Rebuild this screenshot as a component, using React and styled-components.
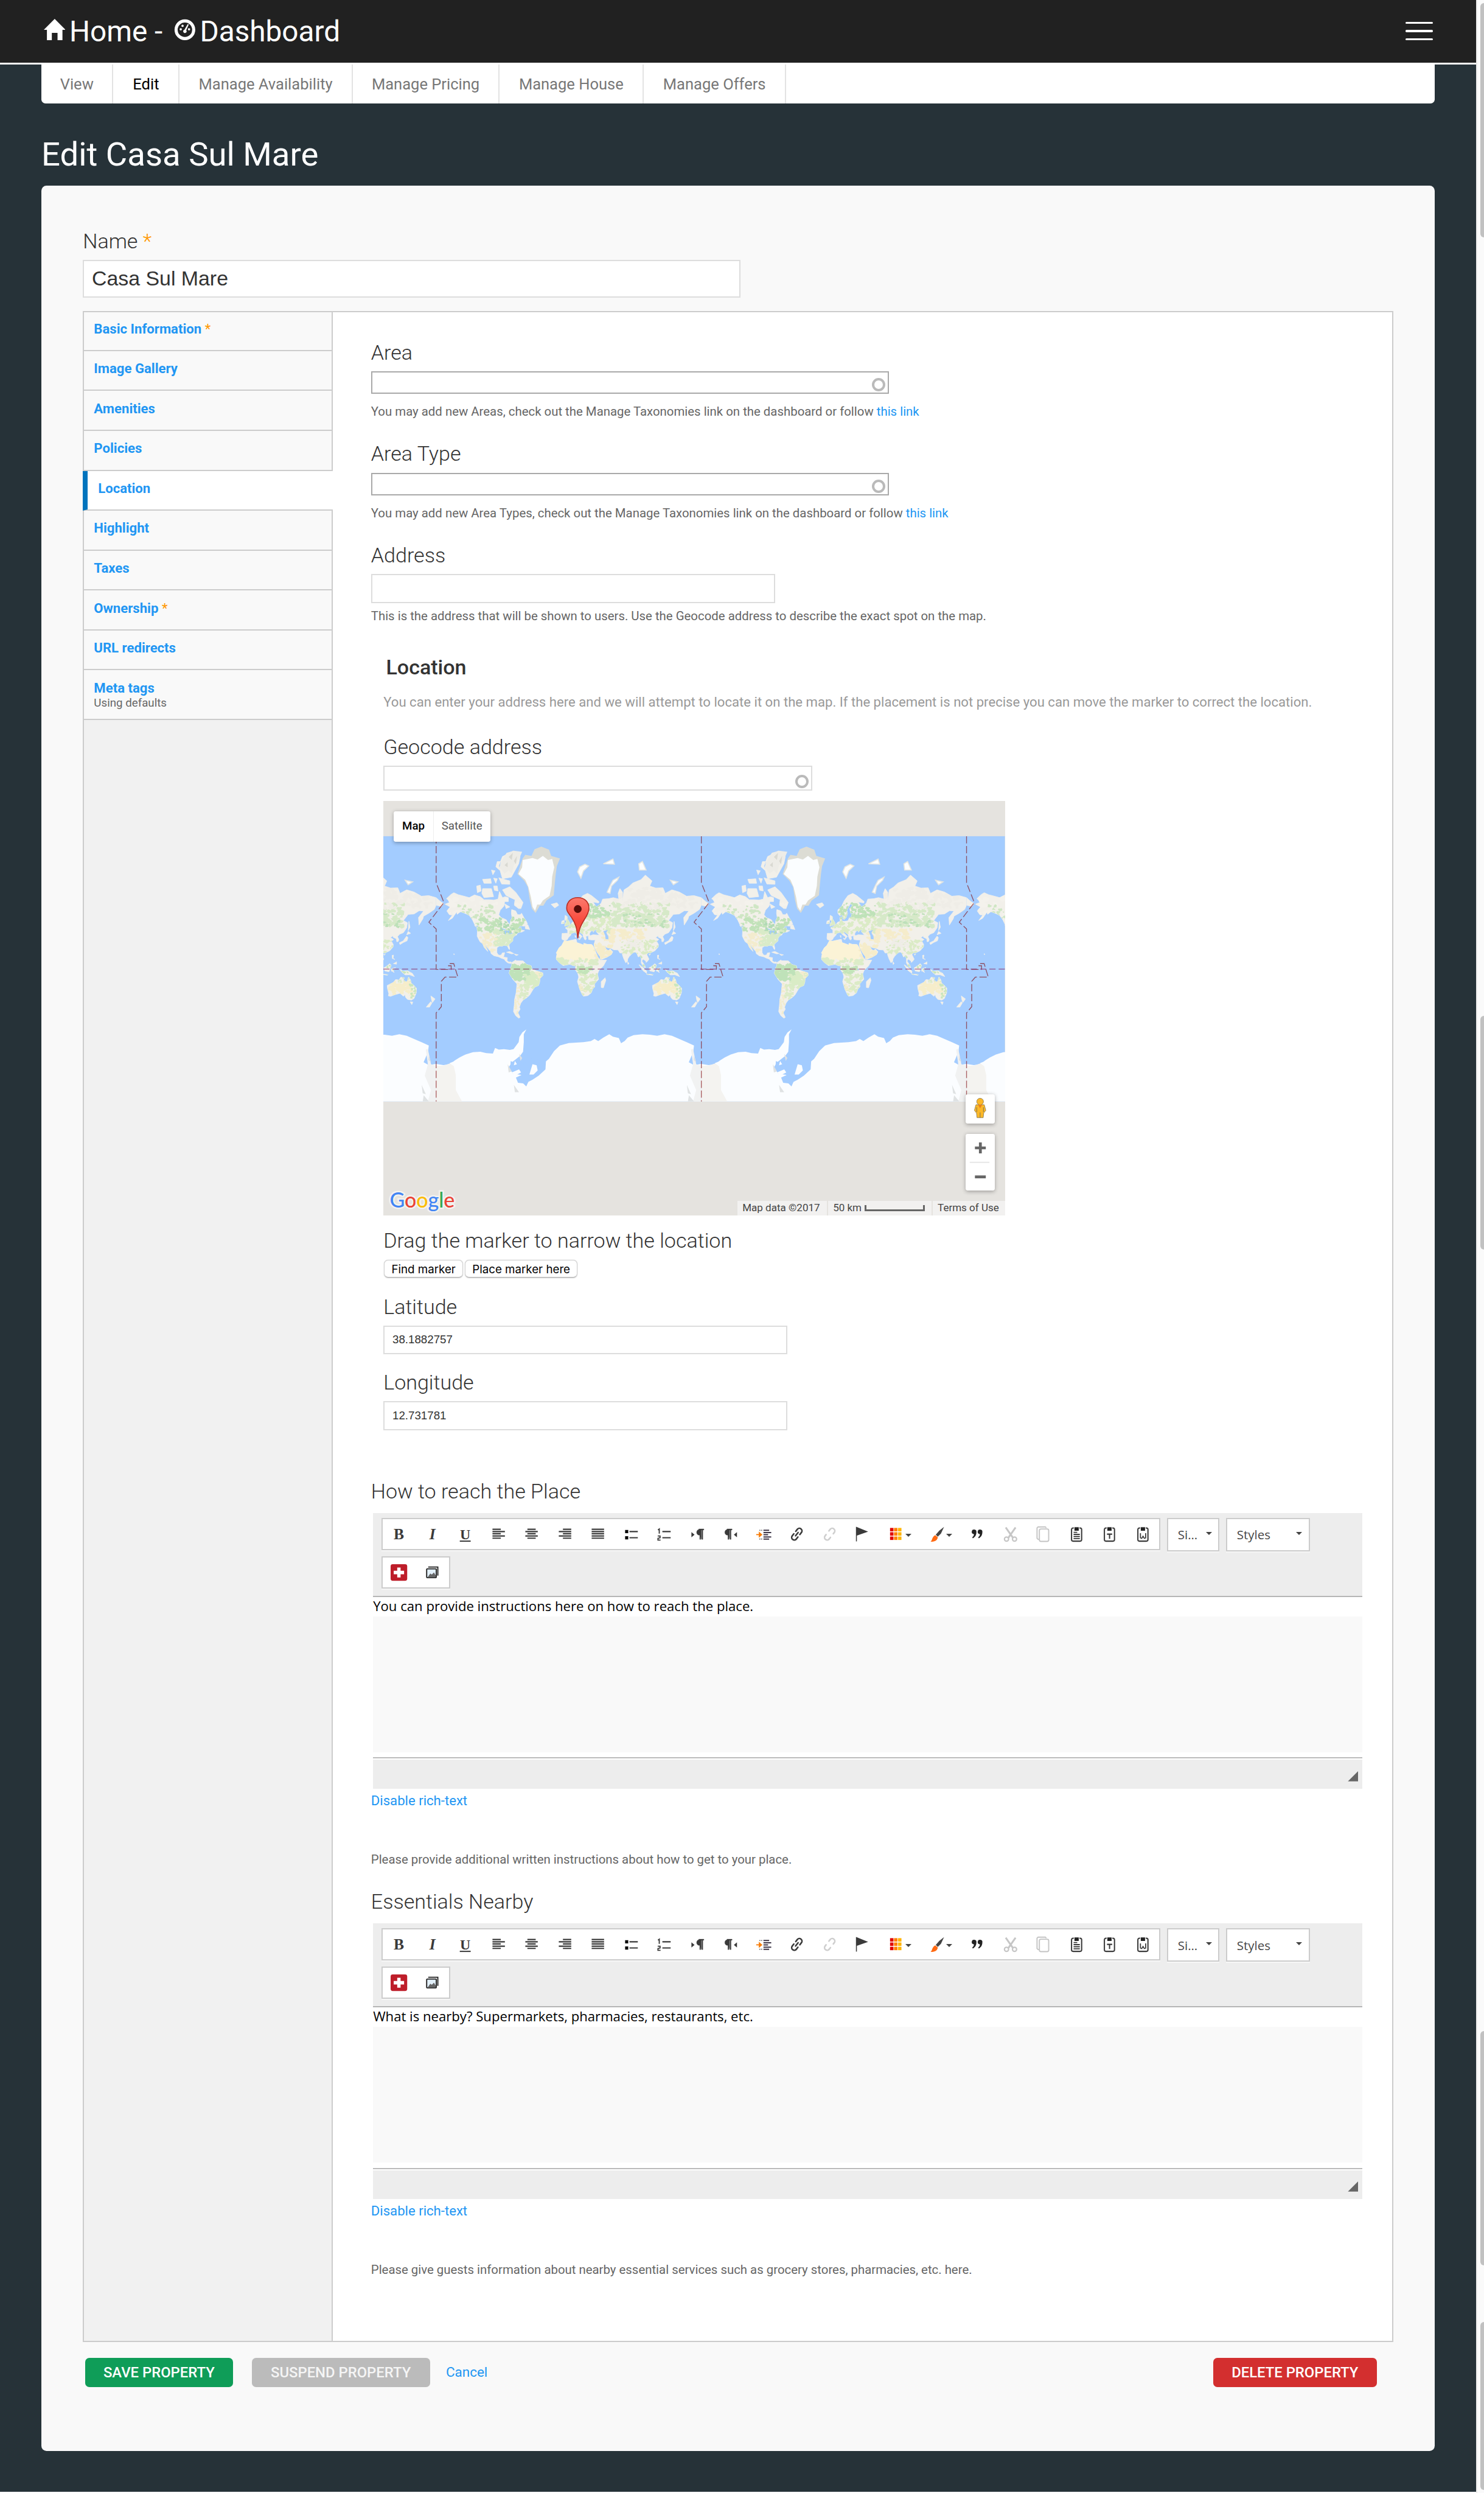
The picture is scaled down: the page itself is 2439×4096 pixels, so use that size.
import React from 'react';
import styled, { createGlobalStyle } from 'styled-components';

const GlobalStyle = createGlobalStyle`
  html, body { margin: 0; padding: 0; background: #fafafa; overflow: hidden; }
  *, *::before, *::after { box-sizing: border-box; }
`;

const roboto = `Roboto, "Liberation Sans", sans-serif`;
const helvetica = `"Liberation Sans", Arial, sans-serif`;
const openSans = `"Open Sans", "Noto Sans", sans-serif`;
const blue = '#2196f3';

const Screen = styled.div`
  zoom: 0.8513;
  width: 2865px;
  height: 4812px;
  display: flex;
  background: #fafafa;
  font-family: ${roboto};
  color: #333;
  overflow: hidden;
`;

const Page = styled.div`
  width: 2850px;
  height: 4809px;
  background: #263238;
  flex: none;
`;

const ScrollGutter = styled.div`
  flex: none;
  width: 15px;
  border-left: 2.4px solid #ececec;
  padding: 6px 0 0 6px;
  display: flex;
  flex-direction: column;
`;

const Thumb = styled.div`
  height: ${p => p.$h}px;
  margin-bottom: ${p => p.$gap}px;
  background: #c1c1c1;
  border-radius: 7px 0 0 7px;
  flex: none;
`;

/* ---------- top bar ---------- */

const TopBar = styled.header`
  height: 124px;
  padding: 0 84px 4px 84px;
  background: #212121;
  border-bottom: 4px solid #fff;
  display: flex;
  align-items: flex-start;
  justify-content: space-between;
`;

const Brand = styled.div`
  display: flex;
  color: #fff;
  font-size: 56px;
  line-height: 66px;
  padding-top: 28px;
`;

const BrandIcon = styled.svg`
  width: 42px;
  height: 42px;
  margin-top: 9px;
  fill: #fff;
`;

const BrandText = styled.span`
  width: ${p => p.$w}px;
  padding-left: 8px;
  white-space: pre;
`;

const MenuButton = styled.div`
  display: flex;
  flex-direction: column;
  gap: 12px;
  padding-top: 42px;
`;

const MenuBar = styled.span`
  width: 52px;
  height: 4px;
  border-radius: 2px;
  background: #fff;
`;

/* ---------- tabs ---------- */

const Tabs = styled.nav`
  margin: 0 80px;
  height: 76px;
  background: #fff;
  border-radius: 0 0 8px 8px;
  display: flex;
`;

const Tab = styled.a`
  width: ${p => p.$w}px;
  border-right: 3px solid #e3e3e3;
  color: ${p => (p.$active ? '#000' : '#777')};
  font-size: 30px;
  line-height: 76px;
  text-align: center;
  white-space: nowrap;
`;

const Title = styled.h1`
  margin: 60px 80px 22px;
  height: 76px;
  color: #fff;
  font-size: 64px;
  line-height: 76px;
  font-weight: 400;
`;

const Card = styled.main`
  margin: 0 80px;
  height: 4372px;
  padding: 84px 80px 0;
  background: #f9f9f9;
  border-radius: 10px;
`;

/* ---------- form parts ---------- */

const Label = styled.label`
  display: block;
  height: 48px;
  margin-top: ${p => p.$mt || 0}px;
  font-size: 40px;
  line-height: 48px;
  font-weight: ${p => (p.$strong ? 500 : 300)};
  padding-left: ${p => p.$indent || 0}px;
  color: #333;
  white-space: nowrap;
`;

const Required = styled.span`
  color: #ff9800;
  font-weight: ${p => (p.$light ? 300 : 400)};
`;

const Input = styled.div`
  position: relative;
  width: ${p => p.$w}px;
  height: ${p => p.$h}px;
  margin-top: 12px;
  background: #fff;
  border: 2.4px solid ${p => (p.$dark ? '#a9a9a9' : '#ddd')};
  padding-left: 15px;
  display: flex;
  align-items: center;
  font-family: ${helvetica};
  font-size: ${p => p.$fs || 22}px;
  color: #333;
`;

const Ring = styled.span`
  position: absolute;
  right: 5px;
  bottom: 2px;
  width: 26px;
  height: 26px;
  border: 5px solid #bababa;
  border-radius: 50%;
`;

const Help = styled.p`
  margin: ${p => p.$mt}px 0 0;
  height: 30px;
  font-size: 23.96px;
  line-height: 31px;
  color: #666;
  white-space: nowrap;
`;

const Link = styled.a`
  color: ${blue};
`;

/* ---------- vertical tabs ---------- */

const Split = styled.section`
  margin-top: 26px;
  height: 3920px;
  border: 2.4px solid #ccc;
  background: #fff;
  display: flex;
`;

const SideMenu = styled.ul`
  list-style: none;
  margin: 0;
  padding: 0;
  width: 480px;
  flex: none;
  background: #f1f1f1;
  border-right: 2.4px solid #ccc;
`;

const SideItem = styled.li`
  height: ${p => p.$h || 77.05}px;
  margin: ${p => (p.$active ? '0 -3px 0 -2.4px' : 0)};
  position: relative;
  padding: ${p => (p.$first ? 17 : 18)}px 0 0 ${p => (p.$active ? 20 : 19)}px;
  background: ${p => (p.$active ? '#fff' : '#f9f9f9')};
  border-bottom: 2.4px solid #ccc;
  border-left: ${p => (p.$active ? '10px solid #0074bd' : '0')};
  font-size: 26px;
  line-height: 32px;
  font-weight: 700;
  color: ${blue};
`;

const SideNote = styled.div`
  font-size: 22px;
  line-height: 28px;
  font-weight: 400;
  color: #666;
`;

const Panel = styled.div`
  flex: 1;
  padding: 54px 58px 0 74px;
`;

const Fieldset = styled.div`
  padding-left: 24px;
`;

const Hint = styled.p`
  margin: 27px 0 0;
  height: 32px;
  font-size: 26px;
  line-height: 32px;
  color: #999;
  white-space: nowrap;
`;

/* ---------- map ---------- */

const MapFrame = styled.div`
  position: relative;
  width: 1200px;
  height: 800px;
  margin-top: 20px;
  background: #e5e3df;
  overflow: hidden;
`;

const MapDrawing = styled.svg`
  display: block;
  width: 1200px;
  height: 800px;
`;

const MapTypes = styled.div`
  position: absolute;
  left: 20px;
  top: 20px;
  height: 58px;
  display: flex;
  background: #fff;
  border-radius: 4px;
  box-shadow: 0 2px 8px rgba(0, 0, 0, 0.3);
`;

const MapType = styled.span`
  width: ${p => p.$w}px;
  text-align: center;
  font-size: 22px;
  line-height: 57px;
  font-weight: ${p => (p.$active ? 500 : 400)};
  color: ${p => (p.$active ? '#000' : '#565656')};
  border-left: ${p => (p.$active ? 'none' : '2px solid #eee')};
`;

const MapControl = styled.div`
  position: absolute;
  right: 20px;
  top: ${p => p.$top}px;
  width: 56px;
  height: ${p => p.$h}px;
  background: #fff;
  border-radius: 4px;
  box-shadow: 0 2px 8px rgba(0, 0, 0, 0.3);
`;

const GoogleLogo = styled.div`
  position: absolute;
  left: 12px;
  bottom: 6px;
  font: 500 40px/48px Lato, ${roboto};
  letter-spacing: -0.1px;
  -webkit-text-stroke: 6px #f3f2f0;
  paint-order: stroke fill;
`;

const Tint = styled.span`
  color: ${p => p.$c};
`;

const MapFooter = styled.div`
  position: absolute;
  right: 0;
  bottom: 0;
  height: 28px;
  display: flex;
  gap: 2px;
  font-size: 20px;
  line-height: 28px;
  color: #444;
`;

const FootCell = styled.span`
  width: ${p => p.$w}px;
  background: rgba(245, 245, 245, 0.75);
  display: flex;
  align-items: center;
  padding-left: 10px;
  gap: 6px;
  white-space: nowrap;
`;

const ScaleBar = styled.i`
  width: 116px;
  height: 12px;
  border: 4px solid #666;
  border-top: 0;
`;

const MarkerButtons = styled.div`
  display: flex;
  gap: 3px;
  margin-top: 14px;
  padding-left: 1px;
`;

const SmallButton = styled.div`
  width: ${p => p.$w}px;
  height: 34px;
  border: 1.3px solid #d0d0d0;
  border-bottom-color: #b0b0b0;
  border-radius: 8px;
  background: #fff;
  box-shadow: 0 1px 2px rgba(0, 0, 0, 0.2);
  color: #000;
  font: 22px/34px Inter, ${helvetica};
  line-height: 35px;
  text-align: center;
  white-space: nowrap;
`;

/* ---------- rich text editor ---------- */

const Editor = styled.div`
  margin: 18px 0 0 4px;
  width: 1910px;
`;

const Toolbar = styled.div`
  height: 162px;
  padding: 10px 0 0 16px;
  background: #ededed;
  border-bottom: 2.4px solid #b6b6b6;
  display: flex;
  flex-wrap: wrap;
  align-content: flex-start;
  align-items: flex-start;
  gap: 10px 12px;
`;

const Group = styled.div`
  height: 62px;
  border: 2.4px solid #ccc;
  background: #fff;
  box-shadow: 0 2px 0 #f8f8f8;
  display: flex;
  align-items: center;
`;

const Cell = styled.span`
  width: ${p => (p.$wide ? 78 : 64)}px;
  height: 56px;
  display: flex;
  align-items: center;
  padding-left: 16px;
  gap: 2px;
`;

const Glyph = styled.svg`
  width: 32px;
  height: 32px;
  flex: none;
  overflow: visible;
`;

const Caret = styled.i`
  width: 0;
  height: 0;
  border: 6px solid transparent;
  border-top-color: #444;
  border-bottom: 0;
  margin-top: ${p => p.$mt || 0}px;
`;

const Combo = styled.div`
  width: ${p => p.$w}px;
  height: 64px;
  border: 2.4px solid #ccc;
  background: #fff;
  box-shadow: 0 2px 0 #f8f8f8;
  padding: 0 12px 0 19px;
  display: flex;
  align-items: center;
  justify-content: space-between;
  font-family: ${openSans};
  font-size: 24px;
  color: #474747;
`;

const TextLine = styled.div`
  height: 38px;
  background: #fff;
  font-family: ${openSans};
  font-size: 26px;
  line-height: 35px;
  color: #000;
`;

const Canvas = styled.div`
  height: 262px;
  background: #f9f9f9;
`;

const StatusBar = styled.div`
  margin-top: 10px;
  height: 60px;
  border-top: 2.4px solid #bbb;
  background: linear-gradient(#fff 2px, #ededed 2px);
  display: flex;
  justify-content: flex-end;
  align-items: flex-end;
  padding: 0 8px 14px 0;
`;

const Resizer = styled.i`
  width: 20px;
  height: 20px;
  background: #666;
  clip-path: polygon(100% 0, 100% 100%, 0 100%);
`;

const ToggleLink = styled.a`
  display: block;
  margin-top: 7px;
  height: 32px;
  font-size: 26px;
  line-height: 32px;
  color: ${blue};
`;

/* ---------- actions ---------- */

const Actions = styled.footer`
  margin-top: 30px;
  padding: 0 32px 0 4px;
  display: flex;
  align-items: center;
`;

const Button = styled.button`
  width: ${p => p.$w}px;
  height: 56px;
  margin: 0 ${p => p.$gap || 0}px 0 0;
  padding: 1px 0 0;
  border: 0;
  border-radius: 8px;
  background: ${p => p.$bg};
  color: ${p => p.$fg || '#fff'};
  font: 500 28px/55px ${roboto};
`;

const Cancel = styled.a`
  flex: 1;
  font-size: 26.4px;
  line-height: 58px;
  color: ${blue};
`;

/* ---------- world map data (lon, lat) ---------- */

const px = lon => ((lon + 180) / 360) * 512;
const py = lat =>
  256 - (512 / (2 * Math.PI)) * Math.log(Math.tan(Math.PI / 4 + (lat * Math.PI) / 360));
const toPath = s => {
  const n = s.split(/[ ,]+/).map(Number);
  let d = '';
  for (let i = 0; i < n.length; i += 2) d += `${i ? 'L' : 'M'}${px(n[i]).toFixed(1)} ${py(n[i + 1]).toFixed(1)}`;
  return d + 'Z';
};

const land = [
  '-168,65.6 -162,66.5 -164,68 -166,68.5 -160,70.5 -156,71.3 -150,70.4 -141,69.6 -135,69 -128,70.3 -120,69.5 -115,68 -108,68 -102,67.8 -96,68.3 -94,71.8 -90,69 -86,69.5 -82,69 -82,67 -87,67 -88,64.5 -93,62 -95,59 -92,57 -85,55.3 -82.3,53 -80,51.3 -79,54.5 -77,57 -78,60 -77.5,62.4 -72,61.5 -69.5,59 -66,59 -64,60 -61,57 -58,54.5 -56,52 -60,50 -66,50.2 -70,47 -65,49 -64,46.5 -60,46 -64,44.5 -66,44.5 -70,43.5 -70.5,41.8 -74,40.6 -76,38 -75.8,35.5 -79,33.2 -81.3,31 -80.2,27 -80.5,25.2 -81.8,26.5 -82.8,29 -84.5,30 -89,30.2 -90,29.2 -94,29.6 -97.3,27.8 -97.6,24 -97.5,21.5 -95.8,18.8 -94,18.2 -91.5,18.6 -90.3,21 -87,21.5 -88,17.5 -88.5,15.8 -83.3,15 -83.8,11 -81,9 -79.5,9.5 -77.5,8.7 -78.5,7.3 -80.5,7.4 -83,8.2 -85.8,10.5 -87.5,13 -92,14.5 -95,16 -101.5,17.5 -105.5,20.3 -106,23 -109.5,26.5 -112.5,30 -114.5,31.7 -111.5,26.5 -109.6,23 -112,25 -114.8,28 -117,32.4 -120.5,34.5 -122.5,37.5 -124.3,40.5 -124,46 -124.7,48.4 -122.5,48 -127.5,51 -130.5,55 -135,58.5 -141,60 -147,61 -151.5,59.3 -152,61 -158,56.5 -163.5,54.7 -158,58.7 -162,59 -165.5,61.5 -161,64',
  '-80,73.7 -72,71.5 -62,66.5 -65,63 -68,63 -74,65 -73,68 -85,70 -90,72.5',
  '-117,73 -105,73 -102,69.5 -115,69 -118,71', '-125,74 -120,74.3 -119,72 -124,71.3',
  '-90,76.5 -78,77 -68,80.5 -66,82 -75,83 -90,82 -95,80', '-95,76.8 -80,75.8 -80,74.6 -91,74.7',
  '-117,76.3 -106,76.5 -105,75 -115,75', '-102,74 -97,74 -96,72 -101,72.3', '-87,65.8 -80,64 -85,63', '-59,51 -55.5,51.2 -53,47 -59,47.8',
  '-102,76.7 -97,76.5 -99,75', '-97,81 -92,81 -94,79 -99,79.8', '-105,79 -100,78.8 -103,77.7', '-123,50.5 -128,50.6 -124,48.5',
  '-77.5,8.5 -72,12 -71,11 -62,10.7 -57,6 -51,4.2 -50,0 -44,-2.7 -35.2,-5.5 -35,-9 -39,-13 -39.5,-18 -41,-22 -46,-24 -48.5,-27 -53,-33.5 -57,-36.5 -62,-39 -65,-42 -67,-46 -66,-48 -69,-51 -66,-54.8 -68,-55.4 -72,-53.5 -75,-50 -74,-44 -73.5,-38 -71.5,-31 -70.3,-20 -76,-14 -81,-6 -80,-2 -79,1.5 -77.5,4',
  '-84.5,22 -80,23 -74.5,20.3 -78,20', '-74,19.8 -68.6,18.7 -71.5,17.8', '-24,65.5 -16,66.4 -13.6,65 -19,63.4',
  '-5.5,50 1.3,51.3 1.5,52.8 -2,56 -2,57.6 -5,58.6 -5.5,55.5 -3,54 -5,52', '-10,52 -6.2,52.3 -6,55 -9.5,54.2',
  '-9.5,38.5 -9,43.3 -1.5,43.5 -1.5,46.5 -4.7,48.4 -1.5,49.5 2,51 5,53.3 8.5,54 8.2,57 10.6,57.6 11,54.2 14.5,54 19,54.5 21,57 24,57.5 23.5,59.2 30,60 22.5,60 21.5,63 25.5,65.2 22,65.7 17.5,62 18.5,60 16.5,57 14,55.5 12.5,56 11,59 8,58.2 5.3,60 5.3,62.2 10.5,64.5 14,67.5 19,70 25.5,71 31,70 41,67 40.5,66.3 33,66.8 37.5,64 41,65 44,66.2 46,68.3 54,68.5 60.5,69 68,68.3 67,71 69.5,73 73,71.5 73,67.5 75,72.5 81,73.6 87,75.1 98,76.2 104,77.6 113,75.8 110,74 118,73.2 128,73.3 131,71 140,72.5 150,71.6 160,69.7 170,70 180,69 180,65 177.5,62.5 170,60 163,58 162,56 156.7,51 156,57 163,61.5 157,61.7 150,59.5 142,59.2 135.5,54.7 141,53 140,48.5 135.5,44 130.5,42.5 127.5,40 129.3,37 128.5,34.8 126.5,34.5 126,37.7 121.5,39.5 121.5,41 118,39 122.3,37 119.3,35 121.8,31.5 121.5,28.5 117,23.8 110.5,21 108,21.5 105.8,19 109,13 107,10.3 105,8.7 104.8,10.5 100.8,13.2 99.2,10.5 103.3,4.5 104,1.4 101.3,3 98.4,8 98.5,13 97.3,16.8 94.3,16 92.3,20.7 90.3,22.2 87,21.3 82.3,16.7 80.1,13.3 79.8,10.3 77.5,8.1 74.5,14 72.8,19 72.7,21 69.5,21 67,24.8 61,25.1 57,26.8 51.5,27.8 48.5,30.3 50.5,26.5 51.5,25 54,24.2 56.3,26 59.8,22.5 57.7,19 52,15.7 45,12.8 43,13 42.6,16.5 39,21 35,28 34.3,31.3 36,36.5 30.5,36.5 27,37 26.5,40.3 33,42 41.5,41.5 37,45.2 39,47.2 35,46.2 33.5,44.5 32.5,46.2 29.5,45 28,42.5 29,41 26,40.8 23,40.3 24,38 23,36.5 21.5,37 19.5,40.5 19.5,42 15,44.5 12.5,45.4 13.7,43.5 18.4,40 16.5,39.7 17,38.9 15.7,38 15.5,40 12,41.8 8.8,44.4 3.2,43.2 3,41.8 -.5,39 -2,36.8 -5.5,36 -9,37',
  '-180,69 -174,67 -170,66 -173,64.3 -180,65',
  '-17,14.7 -16,20 -17,21 -13,27.7 -9.8,30 -6,35.8 -2,35.2 10,37.3 11,34 10.3,33.8 15.5,32.3 20,30.8 20.5,32.8 25,31.6 31,31.4 32.5,30.3 34.5,27 37.2,21 39.5,15.5 43.2,11.8 51.3,11.8 47,4 41,-2 39,-7 40.6,-14 35,-20 35.3,-24 32.7,-26 30.5,-31 26,-34 20,-34.8 18.3,-33 15,-27 11.8,-17 13.5,-11 12.2,-6 8.8,-1 9.5,4 6,4.3 1.5,6.2 -7.5,4.4 -13,8.5 -16.7,12.5',
  '49.3,-12 50.3,-15.5 47,-25 44,-24.5 44,-17',
  '113.5,-22 114,-26 115.7,-32 115,-34.3 118,-35 124,-33 131,-31.5 135.5,-34.8 137.8,-33 138.3,-35.7 141,-38.2 146.3,-39 150,-37.3 153,-31 153.3,-25.5 149.5,-21.5 146,-18.8 145.3,-15 142.5,-10.8 141,-16 139.5,-17.5 135.5,-15 136.8,-12 132,-11.3 129.5,-15 125,-14.3 122,-18', '144.7,-40.8 148.3,-41 147,-43.6',
  '131,-.8 135,-3.4 141,-2.6 147.5,-6 150.5,-10.5 144,-8 138,-8.3 133,-4', '95.3,5.6 100,2.5 106,-3.3 105.5,-5.9 101,-2.5', '109,1.5 111.5,2.7 117,7 119,5 117.7,1 116,-4 110.3,-2.8',
  '105.3,-6.8 114.5,-7.8 114,-8.7 106.5,-7.5', '119.5,0 125,1.6 120.3,.5 123.3,-1 121.5,-2 123,-5 120,-3 119,-3', '120.3,18 122.2,18.4 121.5,14 124,12.7 120.5,14', '122,7 126.3,9.5 126.3,6.3', '80,9.6 81.8,7.3 80.3,6',
  '172.8,-34.5 178.5,-37.8 175,-41.5 173.8,-39.2', '172.7,-40.6 174.3,-41.8 171,-46 166.5,-46',
  '130,33.3 135.5,35.6 137,37.4 140,40.5 141.7,39 140.5,35.5 135.5,33.7 131,31.3', '140,42 142,45.3 145.5,43.3', '142,46 143,54 144.5,49', '108.7,19.2 111,19.8 109.8,18.2',
  '12.6,38.1 15.5,38 15,36.7', '8.2,41 9.6,41 9.4,39', '-156,20.2 -155,19.3 -156,19',
];
const ice = [
  '15,79.8 22,80.4 27,80 20,78.8 16.5,76.7 12,78.5', '52,71.5 56,74 60,76 68,77 66,76 58,74 56,71', '95,80.5 100,81 105,79 96,79', '47,80.5 60,81.5 62,80.4', '138,76 148,75.5 142,74.5',
];
const antarctica =
  '-180,-86 -180,-78 -170,-78.3 -160,-78 -155,-77 -148,-76 -140,-75 -130,-74.2 -120,-74 -112,-74.5 -103,-74.7 -100,-72.5 -95,-73.2 -88,-73 -80,-73.3 -75,-73 -68,-70 -67,-67.5 -63,-65 -57.5,-63.2 -61,-66 -61,-70 -62,-74 -66,-75.5 -77,-77.5 -82,-79 -75,-80.5 -65,-80.7 -58,-82.5 -48,-81 -40,-78.5 -35,-78 -27,-76.5 -20,-73.8 -12,-71.5 0,-70.4 10,-70.2 20,-70 30,-69.5 35,-68.5 40,-69.5 47,-67.8 55,-66 60,-67.3 68,-68 71,-70.5 76,-69.4 80,-67.8 88,-66.5 100,-66 110,-66.3 120,-66.8 130,-66 140,-66.8 150,-68.5 160,-70 170,-71.5 169,-74 163,-77.5 170,-78.3 180,-78 180,-86';

const shade = [
  { box: [-165, -60, 52, 69], color: '#f4f2ec', n: 40, r: 9 },
  { box: [-150, -100, 52, 66], color: '#cfe6c4', n: 55, r: 6 },
  { box: [-125, -58, 45, 56], color: '#c1e2b9', n: 85, r: 6 },
  { box: [-100, -70, 30, 47], color: '#d9ebc8', n: 60, r: 8 },
  { box: [-120, -98, 24, 43], color: '#f3ecce', n: 45, r: 6 },
  { box: [-95, -70, 44, 58], color: '#b2dab6', n: 24, r: 5 },
  { box: [-78, -50, -14, 5], color: '#bfe2b9', n: 70, r: 10 },
  { box: [-60, -36, -25, -5], color: '#d9ecc6', n: 60, r: 8 },
  { box: [-45, -36, -12, -4], color: '#f3ecce', n: 12, r: 4 },
  { box: [-73, -66, -52, -18], color: '#f3ecce', n: 36, r: 4 },
  { box: [-66, -56, -38, -22], color: '#dcebc8', n: 22, r: 6 },
  { box: [-17, 35, 14, 34], color: '#fbf3d6', n: 120, r: 13 },
  { box: [36, 60, 15, 33], color: '#f5ecca', n: 50, r: 7 },
  { box: [-16, 38, 5, 13], color: '#dcecc8', n: 60, r: 6 },
  { box: [9, 30, -6, 4], color: '#c3e4b9', n: 40, r: 6 },
  { box: [12, 40, -33, -7], color: '#dbebc6', n: 75, r: 6 },
  { box: [14, 24, -30, -20], color: '#f3ecce', n: 10, r: 4 },
  { box: [-8, 60, 44, 59], color: '#dbebc6', n: 110, r: 7 },
  { box: [8, 60, 57, 66], color: '#bfe2b9', n: 70, r: 7 },
  { box: [60, 135, 50, 66], color: '#d6e9c8', n: 150, r: 8 },
  { box: [75, 135, 49, 60], color: '#bde0b9', n: 34, r: 5 },
  { box: [60, 180, 63, 74], color: '#efede7', n: 90, r: 9 },
  { box: [45, 105, 35, 47], color: '#f5eccb', n: 75, r: 7 },
  { box: [70, 122, 20, 36], color: '#dbebc6', n: 80, r: 6 },
  { box: [78, 100, 28, 37], color: '#efede7', n: 24, r: 6 },
  { box: [95, 150, -8, 18], color: '#c6e5bd', n: 70, r: 5 },
  { box: [116, 150, -33, -17], color: '#f6edca', n: 60, r: 8 },
  { box: [128, 150, -18, -11], color: '#dbebc6', n: 16, r: 5 },
  { box: [145, 153, -38, -20], color: '#cbe6bd', n: 26, r: 4 },
];

let seed = 7;
const rnd = () => {
  seed = (seed * 16807) % 2147483647;
  return seed / 2147483647;
};
const patches = shade.map(({ box, color, n, r }) => {
  let d = '';
  for (let i = 0; i < n; i++) {
    const cx = px(box[0] + rnd() * (box[1] - box[0]));
    const cy = py(box[2] + rnd() * (box[3] - box[2]));
    const s = r * (0.4 + rnd() * 0.7);
    for (let k = 0; k < 8; k++) {
      const a = (k / 8) * Math.PI * 2;
      const q = s * (0.35 + rnd() * 0.65);
      d += `${k ? 'L' : 'M'}${(cx + Math.cos(a) * q).toFixed(1)} ${(cy + Math.sin(a) * q * 0.8).toFixed(1)}`;
    }
    d += 'Z';
  }
  return { color, d };
});

const landPath = land.map(toPath).join('');
const icePath = ice.map(toPath).join('');
const antPath = toPath(antarctica);
const dateLine =
  'M0 0V90L15 128L-14 166L0 179V257H29V250H24V246H34L42 272H17L10 280V329L0 341V512';

function World() {
  return (
    <g>
      <g clipPath="url(#tile)">
        <path d={landPath} fill="#f2f0ea" stroke="#f2f0ea" strokeWidth="1" />
        <g clipPath="url(#land)">
          {patches.map((p, i) => <path key={i} d={p.d} fill={p.color} />)}
        </g>
        <path d={toPath('-92,48.5 -84,46.5 -88,46.6')} fill="#a3ccff" />
        <path d={toPath('-87.5,46 -80,46 -82,43 -84,46 -86,42')} fill="#a3ccff" />
        <path d={toPath('-83,41.8 -77,44 -76,43.3')} fill="#a3ccff" />
        <path d={toPath('47,45.5 53,46.5 51,44 53.8,40 53.8,37 50,37.5 49.5,41')} fill="#a3ccff" />
        <path d={toPath('31.7,0 34,0 33,-2.7')} fill="#a3ccff" />
        <path d="M128 45L136 32L150 28L166 30L160 44L150 56L146 72L140 66L132 72L122 60Z" fill="#edece7" />
        <path d="M140 40l8-8l-2 14zM132 56l6-6l0 10zM150 48l6-10l-2 16z" fill="#d9d9d2" />
        <path d="M157 73L162 58L167 43L172 36L184 38L190 25L203 20L218 26L222 38L239 43L233 58L231 72L229 92L227 114L213 124L207 134L200 134L192 148L185 140L181 124L177 98L170 86Z" fill="#dcdcd4" />
        <path d="M159 73L166 60L167 46L186 42L196 45L206 38L216 46L224 44L228 60L224 78L223 96L219 115L206 124L201 132L195 132L191 144L186 136L183 118L178 98L172 84Z" fill="#fbfdff" />
        <path d={icePath} fill="#fbfdff" stroke="#e4e6e2" strokeWidth="2" />
        <path d={antPath} fill="#fbfdff" />
        <path d="M-1 443L14 443L22 440L34 436L40 444L38 462L38 490L50 512H-1Z" fill="#f4f3f0" />
        <path d="M26 438L36 434L46 440L40 470L34 444Z" fill="#fbfdff" />
        <path d="M492 412L496 440L490 462L502 490L496 512H512V443L502 440L496 410Z" fill="#f1f2f2" />
        <path d="M484 480l8 18l-6-2zM488 500l10 12h-12zM160 420l6 8l-3 6zM138 440l8 14l-6 2zM150 480l10 14l-8 0zM498 424l4 12l-5-4z" fill="#dfe2e3" />
        <path d="M144 434L152 438L162 432L168 440L186 428L212 434L211 450L198 462L186 470L178 474L174 483L168 477L158 476L154 466L162 462L172 460L170 452L158 456L148 458L143 446Z" fill="#a3ccff" />
        <path d="M180 460l6-20l8 2l2 10l-8 8zM146 456l14-6l4 6l-12 6zM152 434l4 6l-6 2z" fill="#fbfdff" />
      </g>
      <path d={dateLine} fill="none" stroke="#800000" strokeOpacity="0.6" strokeWidth="1.6" strokeDasharray="14 5" />
    </g>
  );
}

function MapView() {
  return (
    <MapFrame>
      <MapDrawing viewBox="0 0 1200 800">
        <defs>
          <clipPath id="tile"><rect width="512" height="512" /></clipPath>
          <clipPath id="land"><path d={landPath} /></clipPath>
          <linearGradient id="pin" x1="0" y1="0" x2="0" y2="1">
            <stop offset="0" stopColor="#fc7a6d" />
            <stop offset="0.6" stopColor="#f8493c" />
            <stop offset="1" stopColor="#f0493e" />
          </linearGradient>
        </defs>
        <rect y="68" width="1200" height="512" fill="#a3ccff" />
        {[-410, 102, 614, 1126].map(x => (
          <g key={x} transform={`translate(${x} 68)`}><World /></g>
        ))}
        <path d="M0 324.5H1200" stroke="#800040" strokeOpacity="0.5" strokeWidth="2" strokeDasharray="12 6" />
        <path d="M375.4 265C374 245 371 236 363 224C357 216 354 213 354 207C354 194 363 186.500 375.400 186.500S397 194 397 207C397 214 394 220 388 229C380 242 377 250 375.400 265Z" fill="url(#pin)" stroke="#b93026" strokeWidth="2" />
        <circle cx="375.400" cy="208.500" r="7.500" fill="#590e0a" />
      </MapDrawing>
      <MapTypes>
        <MapType $w={76} $active>Map</MapType>
        <MapType $w={110}>Satellite</MapType>
      </MapTypes>
      <MapControl $top={566} $h={56}>
        <svg width="56" height="56" viewBox="0 0 56 56">
          <g fill="#fcb827" stroke="#8a7a50" strokeWidth="1">
            <path d="M20 20H36L39 31L35 36L34 45H22L21 36L17 31Z" />
            <circle cx="28" cy="14" r="6.500" />
          </g>
          <path d="M24 20H32L28 27Z" fill="#e8801c" />
          <path d="M28 35V45M21.500 25V34M34.500 25V34" stroke="#8a7a50" strokeWidth="1.300" />
        </svg>
      </MapControl>
      <MapControl $top={642} $h={110}>
        <svg width="56" height="110" viewBox="0 0 56 110">
          <path d="M18 27H39M28.500 16.500V37.500M18 83H39" stroke="#666" strokeWidth="5.500" />
          <path d="M8 55H46" stroke="#e6e6e6" strokeWidth="2.400" />
        </svg>
      </MapControl>
      <GoogleLogo>
        <Tint $c="#4285f4">G</Tint><Tint $c="#ea4335">o</Tint><Tint $c="#fbbc05">o</Tint>
        <Tint $c="#4285f4">g</Tint><Tint $c="#34a853">l</Tint><Tint $c="#ea4335">e</Tint>
      </GoogleLogo>
      <MapFooter>
        <FootCell $w={173}>Map data ©2017</FootCell>
        <FootCell $w={200}>50 km <ScaleBar /></FootCell>
        <FootCell $w={140}>Terms of Use</FootCell>
      </MapFooter>
    </MapFrame>
  );
}

/* ---------- toolbar glyphs ---------- */

const ink = '#3a3a3a';
const lines = rows => (
  <path d={rows.map(([a, b], i) => `M${a} ${6.600 + i * 4.300}H${b}`).join('')} stroke={ink} strokeWidth="2.600" />
);
const serif = 'Liberation Serif, serif';
const clipboard = (
  <>
    <rect x="6" y="4" width="19.500" height="25.500" rx="3" fill="#fff" stroke={ink} strokeWidth="2.400" />
    <path d="M11 2H20.500V10H11Z" fill="#222" stroke="#fff" strokeWidth="1.200" />
  </>
);
const pilcrow = x => (
  <path d={`M${x} 26V7h-4a5 5.500 0 0 0 0 11h1V26h1.800V8H${x + 1}V26h2V8h2V6h-10`} fill={ink} stroke={ink} strokeWidth=".5" />
);

const glyphs = {
  bold: <text x="16" y="26" textAnchor="middle" fontFamily={serif} fontWeight="700" fontSize="30" fill={ink}>B</text>,
  italic: <text x="16" y="26" textAnchor="middle" fontFamily={serif} fontWeight="700" fontStyle="italic" fontSize="30" fill={ink}>I</text>,
  underline: (
    <>
      <text x="16" y="25.500" textAnchor="middle" fontFamily={serif} fontWeight="700" fontSize="28" fill={ink}>U</text>
      <path d="M5.500 29.500H26.500" stroke={ink} strokeWidth="2.400" />
    </>
  ),
  left: lines([[4, 20], [4, 28], [4, 20], [4, 28], [4, 20]]),
  center: lines([[8, 24], [4, 28], [8, 24], [4, 28], [8, 24]]),
  right: lines([[12, 28], [4, 28], [12, 28], [4, 28], [12, 28]]),
  justify: lines([[4, 28], [4, 28], [4, 28], [4, 28], [4, 28]]),
  bullets: (
    <>
      <path d="M4 8H10V14H4ZM4 20H10V26H4Z" fill="#000" />
      <path d="M12.500 11H28.500M12.500 23H28.500" stroke={ink} strokeWidth="2.400" />
    </>
  ),
  numbers: (
    <>
      <path d="M4 8L6.500 6V15M3.500 19.500H8V23L4 24V27.500H9" fill="none" stroke={ink} strokeWidth="2.200" />
      <path d="M12.500 11H28.500M12.500 23H28.500" stroke={ink} strokeWidth="2.400" />
    </>
  ),
  ltr: <><path d="M4 12L10 17L4 22Z" fill={ink} />{pilcrow(23)}</>,
  rtl: <><path d="M28.500 12L22.500 17L28.500 22Z" fill={ink} />{pilcrow(14)}</>,
  div: (
    <>
      <path d="M7 8.500h7M7 25.500h7" stroke="#666" strokeWidth="2" strokeDasharray="2 1.500" />
      <path d="M15 8.500H26M15 13H30M15 17H24M15 21.500H30M15 25.500H26" stroke="#3d3547" strokeWidth="2.400" />
      <path d="M1 16H6V11L13 17L6 23V18H1Z" fill="#f77d0a" />
    </>
  ),
  link: (
    <g fill="none" stroke={ink} strokeWidth="3" strokeLinecap="round" transform="rotate(-52 16 16)">
      <path d="M13 11H8a5 5 0 0 0 0 10H13M19 11H24a5 5 0 0 1 0 10H19M12 16H20" />
    </g>
  ),
  unlink: (
    <g fill="none" stroke="#cfcfcf" strokeWidth="3" strokeLinecap="round" transform="rotate(-52 16 16)">
      <path d="M11 11H8a5 5 0 0 0 0 10H12M20 11H24a5 5 0 0 1 0 10H21" />
    </g>
  ),
  flag: <path d="M3 2V30M3 3L23 11L3 18Z" fill={ink} stroke={ink} strokeWidth="1.800" />,
  colors: (
    <>
      {['#e00000', '#ff7f00', '#ffb400'].map((c, i) =>
        [4, 12.300, 20.600].map(y => <rect key={c + y} x={4.500 + i * 7.700} y={y} width="6.600" height="6.600" fill={c} />))}
    </>
  ),
  brush: (
    <>
      <path d="M30 2L24 15L18 21L14 17L21 9Z" fill="#444" />
      <path d="M13 18L18 22C17 28 12 31 4 30.500C8 28 6 22 13 18Z" fill="#ff6a13" />
    </>
  ),
  quote: (
    <path d="M6 11a4.500 4.500 0 1 1 9 1C15 18 12 22 8 24L7 22C10 20 10.500 18 10 16A4.500 4.500 0 0 1 6 11ZM17.500 11a4.500 4.500 0 1 1 9 1C26.500 18 23.500 22 19.500 24L18.500 22C21.500 20 22 18 21.500 16A4.500 4.500 0 0 1 17.500 11Z" fill="#222" />
  ),
  cut: (
    <g fill="none" stroke="#c6c6c6">
      <path d="M7 3L21 23M26 3L12 23" strokeWidth="3.500" />
      <circle cx="8.500" cy="25.500" r="4" strokeWidth="2.600" />
      <circle cx="24" cy="25.500" r="4" strokeWidth="2.600" />
    </g>
  ),
  copy: (
    <g fill="#fff" stroke="#c4c4c4" strokeWidth="2.200">
      <path d="M8 26H6L4 24V4L6 2H20L22 4" />
      <rect x="8.500" y="6" width="18" height="24" rx="3" />
    </g>
  ),
  paste: <>{clipboard}<path d="M10 12.500H17M10 16.500H22M10 20.500H22M10 24.500H22" stroke={ink} strokeWidth="2.200" /></>,
  pasteText: <>{clipboard}<path d="M11 16H21M16 16V25" stroke={ink} strokeWidth="2.400" fill="none" /></>,
  pasteWord: <>{clipboard}<path d="M11 14V23L13.500 24L16 20L18.500 24L21 23V14" stroke={ink} strokeWidth="2" fill="none" /></>,
  add: (
    <>
      <rect width="32" height="32" rx="4" fill="#be1e2a" />
      <path d="M16 6.500V25.500M6 16H26" stroke="#fff" strokeWidth="6.500" />
    </>
  ),
  image: (
    <>
      <path d="M8 5.500H26.500V22" fill="none" stroke="#222" strokeWidth="2.200" />
      <rect x="5" y="9" width="18.500" height="17" rx="1" fill="#e3f1fb" stroke="#222" strokeWidth="2.200" />
      <path d="M7 25L12 18L15 20L19 16L22.500 22V25Z" fill="#666" />
    </>
  ),
};

const mainTools = ['bold', 'italic', 'underline', 'left', 'center', 'right', 'justify', 'bullets', 'numbers', 'ltr', 'rtl', 'div', 'link', 'unlink', 'flag', 'colors', 'brush', 'quote', 'cut', 'copy', 'paste', 'pasteText', 'pasteWord'];
const extraTools = ['add', 'image'];

function Tool({ name }) {
  const wide = name === 'colors' || name === 'brush';
  return (
    <Cell $wide={wide}>
      <Glyph viewBox="0 0 32 32">{glyphs[name]}</Glyph>
      {wide && <Caret $mt={4} />}
    </Cell>
  );
}

function RichText({ text }) {
  return (
    <>
      <Editor>
        <Toolbar>
          <Group>{mainTools.map(t => <Tool key={t} name={t} />)}</Group>
          <Combo $w={102}>Si...<Caret $mt={-4} /></Combo>
          <Combo $w={162}>Styles<Caret $mt={-4} /></Combo>
          <Group>{extraTools.map(t => <Tool key={t} name={t} />)}</Group>
        </Toolbar>
        <TextLine>{text}</TextLine>
        <Canvas />
        <StatusBar><Resizer /></StatusBar>
      </Editor>
      <ToggleLink>Disable rich-text</ToggleLink>
    </>
  );
}

const tabs = [['View', 139], ['Edit', 128], ['Manage Availability', 334], ['Manage Pricing', 284], ['Manage House', 278], ['Manage Offers', 275]];

export default function App() {
  return (
    <>
      <GlobalStyle />
      <Screen>
        <Page>
          <TopBar>
            <Brand>
              <BrandIcon viewBox="0 0 42 42">
                <path d="M21 0L42 21H36V41H26.500V27H15.500V41H6V21H0Z" />
              </BrandIcon>
              <BrandText $w={210}>Home -</BrandText>
              <BrandIcon viewBox="0 0 42 42">
                <circle cx="21" cy="21" r="17" fill="none" stroke="#fff" strokeWidth="6" />
                <circle cx="13" cy="20" r="2.200" /><circle cx="16.500" cy="13.500" r="2.200" />
                <circle cx="29" cy="20" r="2.200" />
                <path d="M26.500 10L28.500 11L23.500 22A3.200 3.200 0 1 1 20 21Z" />
              </BrandIcon>
              <BrandText>Dashboard</BrandText>
            </Brand>
            <MenuButton><MenuBar /><MenuBar /><MenuBar /></MenuButton>
          </TopBar>
          <Tabs>
            {tabs.map(([t, w]) => <Tab key={t} $w={w} $active={t === 'Edit'}>{t}</Tab>)}
          </Tabs>
          <Title>Edit Casa Sul Mare</Title>
          <Card>
            <Label>Name <Required $light>*</Required></Label>
            <Input $w={1270} $h={72} $fs={39.8}>Casa Sul Mare</Input>
            <Split>
              <SideMenu>
                <SideItem $h={75.3} $first>Basic Information <Required>*</Required></SideItem>
                <SideItem>Image Gallery</SideItem>
                <SideItem>Amenities</SideItem>
                <SideItem>Policies</SideItem>
                <SideItem $active>Location</SideItem>
                <SideItem>Highlight</SideItem>
                <SideItem>Taxes</SideItem>
                <SideItem>Ownership <Required>*</Required></SideItem>
                <SideItem>URL redirects</SideItem>
                <SideItem $h={96}>Meta tags<SideNote>Using defaults</SideNote></SideItem>
              </SideMenu>
              <Panel>
                <Label>Area</Label>
                <Input $w={1000} $h={44} $dark><Ring /></Input>
                <Help $mt={19}>You may add new Areas, check out the Manage Taxonomies link on the dashboard or follow <Link>this link</Link></Help>
                <Label $mt={43}>Area Type</Label>
                <Input $w={1000} $h={44} $dark><Ring /></Input>
                <Help $mt={19}>You may add new Area Types, check out the Manage Taxonomies link on the dashboard or follow <Link>this link</Link></Help>
                <Label $mt={43}>Address</Label>
                <Input $w={780} $h={56} />
                <Help $mt={9}>This is the address that will be shown to users. Use the Geocode address to describe the exact spot on the map.</Help>
                <Fieldset>
                  <Label $mt={61} $strong $indent={5}>Location</Label>
                  <Hint>You can enter your address here and we will attempt to locate it on the map. If the placement is not precise you can move the marker to correct the location.</Hint>
                  <Label $mt={47}>Geocode address</Label>
                  <Input $w={828} $h={48}><Ring /></Input>
                  <MapView />
                  <Label $mt={24}>Drag the marker to narrow the location</Label>
                  <MarkerButtons>
                    <SmallButton $w={153}>Find marker</SmallButton>
                    <SmallButton $w={218}>Place marker here</SmallButton>
                  </MarkerButtons>
                  <Label $mt={32}>Latitude</Label>
                  <Input $w={780} $h={56}>38.1882757</Input>
                  <Label $mt={30}>Longitude</Label>
                  <Input $w={780} $h={56}>12.731781</Input>
                </Fieldset>
                <Label $mt={94}>How to reach the Place</Label>
                <RichText text="You can provide instructions here on how to reach the place." />
                <Help $mt={82}>Please provide additional written instructions about how to get to your place.</Help>
                <Label $mt={43}>Essentials Nearby</Label>
                <RichText text="What is nearby? Supermarkets, pharmacies, restaurants, etc." />
                <Help $mt={82}>Please give guests information about nearby essential services such as grocery stores, pharmacies, etc. here.</Help>
              </Panel>
            </Split>
            <Actions>
              <Button $w={286} $gap={36} $bg="#0f9d58">SAVE PROPERTY</Button>
              <Button $w={344} $gap={31} $bg="#bbb" $fg="#f5f5f5">SUSPEND PROPERTY</Button>
              <Cancel>Cancel</Cancel>
              <Button $w={316} $bg="#d32f2f">DELETE PROPERTY</Button>
            </Actions>
          </Card>
        </Page>
        <ScrollGutter>
          <Thumb $h={452} $gap={1502} />
          <Thumb $h={452} $gap={1508} />
          <Thumb $h={452} $gap={110} />
          <Thumb $h={324} $gap={0} />
        </ScrollGutter>
      </Screen>
    </>
  );
}
